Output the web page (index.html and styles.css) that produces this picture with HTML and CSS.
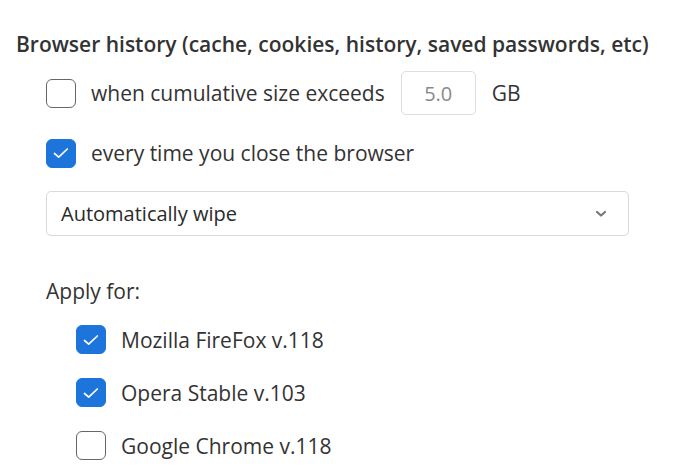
FILE: index.html
```html
<!DOCTYPE html>
<html>
<head>
<meta charset="utf-8">
<link rel="stylesheet" href="styles.css">
</head>
<body>
<div class="panel">
  <h1 class="title">Browser history (cache, cookies, history, saved passwords, etc)</h1>
  <div class="opts">
    <div class="row">
      <span class="cb"></span>
      <span class="label">when cumulative size exceeds</span>
      <span class="num">5.0</span>
      <span class="unit">GB</span>
    </div>
    <div class="row">
      <span class="cb on"><svg viewBox="0 0 28 28" width="28" height="28"><path d="M7.5 14.5 L11.7 18.2 L20.3 10" fill="none" stroke="#fff" stroke-width="1.7" stroke-linecap="round" stroke-linejoin="round"/></svg></span>
      <span class="label">every time you close the browser</span>
    </div>
    <div class="select">
      <span>Automatically wipe</span>
      <svg class="chev" viewBox="0 0 12 8" width="12" height="8"><path d="M2 2 L6 5.5 L10 2" fill="none" stroke="#777" stroke-width="2.2" stroke-linecap="round" stroke-linejoin="round"/></svg>
    </div>
    <div class="apply">Apply for:</div>
    <div class="list">
      <div class="row">
        <span class="cb on"><svg viewBox="0 0 28 28" width="28" height="28"><path d="M7.5 14.5 L11.7 18.2 L20.3 10" fill="none" stroke="#fff" stroke-width="1.7" stroke-linecap="round" stroke-linejoin="round"/></svg></span>
        <span class="label">Mozilla FireFox v.118</span>
      </div>
      <div class="row">
        <span class="cb on"><svg viewBox="0 0 28 28" width="28" height="28"><path d="M7.5 14.5 L11.7 18.2 L20.3 10" fill="none" stroke="#fff" stroke-width="1.7" stroke-linecap="round" stroke-linejoin="round"/></svg></span>
        <span class="label">Opera Stable v.103</span>
      </div>
      <div class="row">
        <span class="cb"></span>
        <span class="label">Google Chrome v.118</span>
      </div>
    </div>
  </div>
</div>
</body>
</html>
```
FILE: styles.css
```css
* { box-sizing: border-box; }
html, body { margin: 0; padding: 0; background: #fff; }
body {
  font-family: "Open Sans", "Noto Sans", sans-serif;
  color: #333;
  width: 690px;
  height: 470px;
  overflow: hidden;
}
.panel { padding: 30px 0 0 16px; }
.title {
  margin: 0;
  font-size: 21px;
  font-weight: 600;
  line-height: 28px;
  color: #333;
}
.opts { padding-left: 30px; padding-top: 13px; }
.row {
  display: flex;
  align-items: center;
  height: 44px;
}
.opts > .row + .row { margin-top: 16px; }
.cb {
  width: 30px;
  height: 29px;
  border: 1.5px solid #666;
  border-radius: 6px;
  flex: none;
  display: flex;
  align-items: center;
  justify-content: center;
  background: #fff;
}
.cb.on { background: #1d74da; border-color: #1d74da; }
.cb svg { display: block; }
.label {
  margin-left: 15px;
  font-size: 21px;
  color: #333;
}
.num {
  margin-left: 16px;
  width: 75px;
  height: 44px;
  border: 1px solid #dedede;
  border-radius: 5px;
  display: flex;
  align-items: center;
  justify-content: center;
  font-size: 20px;
  color: #8a8a8a;
}
.unit { margin-left: 16px; font-size: 21px; color: #333; }
.select {
  margin-top: 16px;
  width: 583px;
  height: 45px;
  border: 1px solid #d9d9d9;
  border-radius: 5px;
  display: flex;
  align-items: center;
  justify-content: space-between;
  padding: 0 21px 0 14px;
  font-size: 20px;
  color: #2a2a2a;
}
.chev { display: block; }
.apply {
  margin-top: 42px;
  font-size: 21px;
  line-height: 26px;
  color: #333;
}
.list { padding-left: 30px; margin-top: 9px; }
.list .row { height: 53px; }
```
